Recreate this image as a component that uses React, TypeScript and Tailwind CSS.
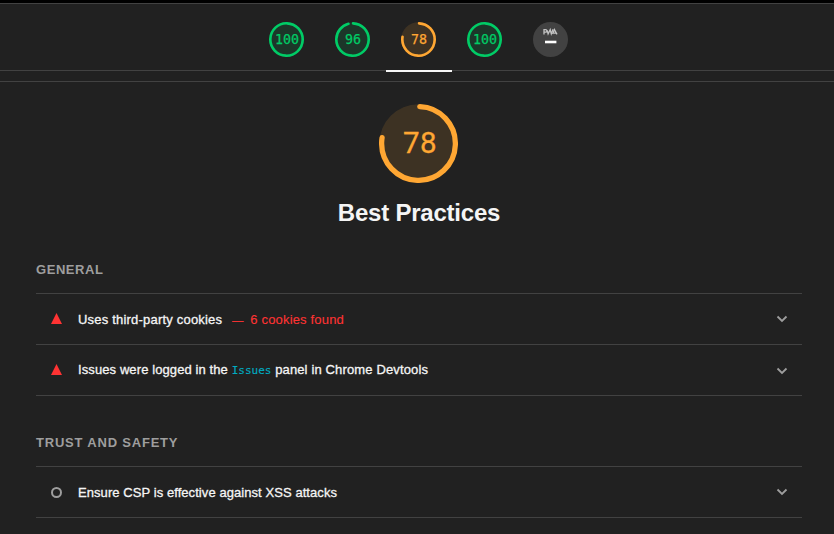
import type { ReactNode } from "react";

type Tone = "pass" | "average";

const toneText: Record<Tone, string> = {
  pass: "text-[#00cc66]",
  average: "text-[#ffa733]",
};

function Ring({ score, thickness, className }: { score: number; thickness: number; className: string }) {
  const radius = 60 - thickness / 2;
  const length = 2 * Math.PI * radius;
  const filled = score === 100 ? length : (score / 100) * length - thickness / 2;
  return (
    <svg viewBox="0 0 120 120" className={className} fill="none">
      <circle cx="60" cy="60" r="59.5" fill="currentColor" fillOpacity="0.13" />
      <circle
        cx="60"
        cy="60"
        r={radius}
        stroke="currentColor"
        strokeWidth={thickness}
        strokeLinecap="round"
        strokeDasharray={`${filled} ${length}`}
        transform="rotate(-88 60 60)"
      />
    </svg>
  );
}

function Tab({ score, tone, active }: { score: number; tone: Tone; active?: boolean }) {
  return (
    <div className={`flex w-[66px] flex-col items-center justify-between ${toneText[tone]}`}>
      <div className="mt-[18px] grid size-[35px] place-items-center">
        <Ring score={score} thickness={9} className="col-start-1 row-start-1 size-[35px]" />
        <span className="col-start-1 row-start-1 pl-px font-['DejaVu_Sans_Mono',monospace] text-[13.3px] leading-none [-webkit-text-stroke:0.25px_currentColor]">
          {score}
        </span>
      </div>
      {active && <div className="h-[2px] w-full bg-[#f5f5f5]" />}
    </div>
  );
}

function PwaTab() {
  return (
    <div className="flex w-[66px] justify-center">
      <svg viewBox="0 0 35 35" className="mt-[18px] size-[35px]" fill="none">
        <circle cx="17.5" cy="17.5" r="17.5" fill="#424242" />
        <g stroke="#c4c4c4" strokeWidth="1.3">
          <path d="M11 12.4V7.7h1.6q1.3 0 1.3 1.2t-1.5 1.2h-1.4" />
          <path d="M14.2 8.4l.9 3.4 2.1-4.2 1.1 4.2 1.8-4.6" />
          <path d="M19.6 12l1.8-4.4 2.6 4.8M20.6 11.2h2.6" />
        </g>
        <path d="M12 20h11.4" stroke="#fff" strokeWidth="2.6" />
      </svg>
    </div>
  );
}

function Chevron({ className = "" }: { className?: string }) {
  return (
    <svg viewBox="0 0 12 8" className={`mr-[14px] h-2 w-3 ${className}`} fill="none">
      <path d="M1.5 1.5L6 6l4.5-4.5" stroke="#9e9e9e" strokeWidth="1.8" />
    </svg>
  );
}

function Audit({ icon, children, chevron }: { icon: "fail" | "info"; children: ReactNode; chevron?: string }) {
  return (
    <div className="flex h-[51px] items-center border-b border-[#424242]">
      <div className="ml-[15px] mr-[16px] w-[11px]">
        {icon === "fail" ? (
          <svg viewBox="0 0 11 11" className="mt-[-1px] size-[11px]">
            <path d="M5.5 0L11 11H0z" fill="#ff3333" />
          </svg>
        ) : (
          <div className="mt-px size-[11px] rounded-full border-2 border-[#9e9e9e]" />
        )}
      </div>
      <div className="flex-1 whitespace-pre pt-[2px] text-[13px] leading-5 text-[#f5f5f5] [-webkit-text-stroke:0.3px_currentColor]">
        {children}
      </div>
      <Chevron className={chevron} />
    </div>
  );
}

function Heading({ children }: { children: ReactNode }) {
  return (
    <h2 className="flex h-[34px] items-start border-b border-[#424242] text-[13px] font-bold leading-5 text-[#9e9e9e]">
      {children}
    </h2>
  );
}

export default function App() {
  return (
    <div className="h-[534px] w-[834px] overflow-hidden border-t-[3px] border-black bg-[#212121] font-['Liberation_Sans',Arial,sans-serif]">
      <header className="flex h-[69px] justify-center border-t border-[#424242] pl-[3px]">
        <Tab score={100} tone="pass" />
        <Tab score={96} tone="pass" />
        <Tab score={78} tone="average" active />
        <Tab score={100} tone="pass" />
        <PwaTab />
      </header>
      <div className="-mt-[2px] h-[12px] border-y border-[#424242]" />
      <main className="pl-[36px] pr-[32px]">
        <div className="flex flex-col items-center text-[#ffa733]">
          <div className="mt-[22px] mr-px grid size-[79px] place-items-center">
            <Ring score={78} thickness={8} className="col-start-1 row-start-1 size-[79px]" />
            <span className="col-start-1 row-start-1 pl-[3px] font-['Roboto',sans-serif] text-[29.5px] leading-none tracking-[0.5px] [-webkit-text-stroke:0.3px_currentColor]">78</span>
          </div>
          <h1 className="mt-[13px] text-[24px] font-bold leading-[34px] tracking-[-0.22px] text-[#f5f5f5]">Best Practices</h1>
        </div>
        <section className="mt-[30px]">
          <Heading><span className="tracking-[0.55px]">GENERAL</span></Heading>
          <Audit icon="fail" chevron="-mt-px">
            <span className="tracking-[0.2px]">Uses third-party cookies</span>
            <span className="ml-[10px] text-[11px] text-[#ff3333] [-webkit-text-stroke:0.4px_currentColor]">—</span>
            <span className="ml-[7px] tracking-[0.18px] text-[#ff3333] [-webkit-text-stroke:0.1px_currentColor]">6 cookies found</span>
          </Audit>
          <Audit icon="fail" chevron="mt-px">
            <span className="relative -top-px">
              <span className="tracking-[0.1px]">Issues were logged in the </span>
              <code className="font-['DejaVu_Sans_Mono',monospace] text-[11px] text-[#00acc1] [-webkit-text-stroke:0.15px_currentColor]">Issues</code>
              <span className="tracking-[0.14px]"> panel in Chrome Devtools</span>
            </span>
          </Audit>
        </section>
        <section className="mt-[37px]">
          <Heading><span className="tracking-[0.8px]">TRUST AND SAFETY</span></Heading>
          <Audit icon="info">
            <span className="tracking-[0.07px]">Ensure CSP is effective against XSS attacks</span>
          </Audit>
        </section>
      </main>
    </div>
  );
}
